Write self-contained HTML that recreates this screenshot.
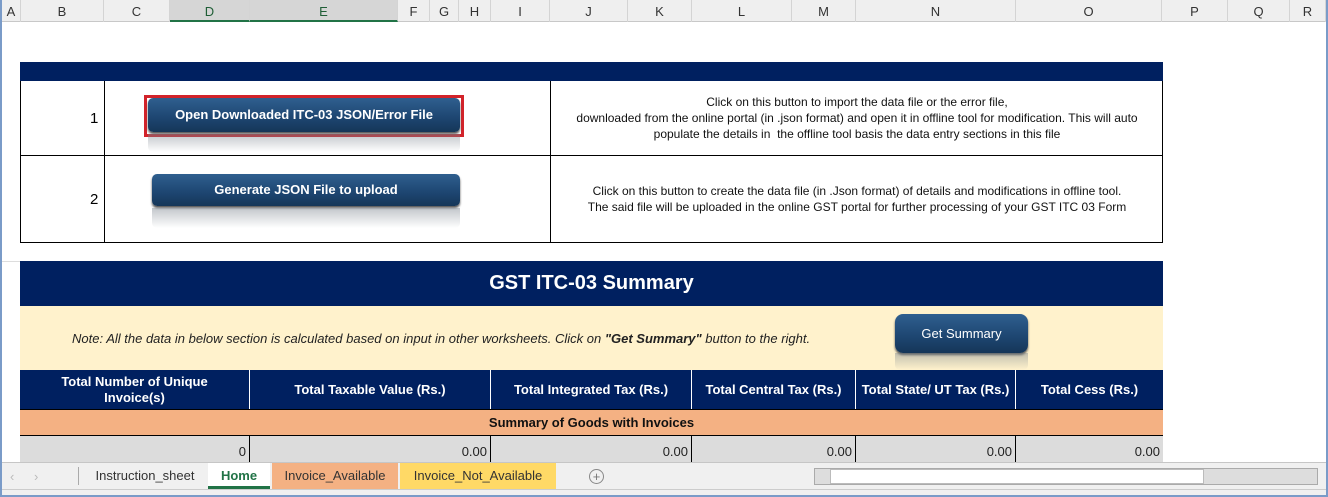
<!DOCTYPE html><html><head><style>
*{margin:0;padding:0;box-sizing:border-box}
body{width:1328px;height:497px;overflow:hidden;background:#fff;font-family:"Liberation Sans",Arial,sans-serif;position:relative}
.a{position:absolute}
.hdr{top:0;height:22px;background:#efefef;border-bottom:1px solid #c8c8c8;font-size:13px;color:#333}
.col{position:absolute;top:0;height:22px;border-right:1px solid #d4d4d4;text-align:center;line-height:24px}
.btn{position:absolute;background:linear-gradient(#2f5f8f,#1d4570 60%,#153658);color:#fff;font-weight:bold;font-size:13px;text-align:center;border-radius:5px;box-shadow:0 2px 2px #555}
.refl{position:absolute;background:linear-gradient(rgba(120,130,140,.45),rgba(255,255,255,0));border-radius:0 0 5px 5px}
.th{position:absolute;color:#fff;font-weight:bold;font-size:13px;text-align:center;border-right:1px solid #fff;display:flex;align-items:center;justify-content:center;height:39px;top:370px}
.td{position:absolute;top:436px;height:26px;border-right:1px solid #000;text-align:right;padding-right:3px;font-size:13px;line-height:32px;color:#222}
</style></head><body>
<div class="a" style="left:0;top:0;width:1328px;height:497px;border:2px solid #7a9bc8;border-top:1px solid #7a9bc8"></div>
<div class="a hdr" style="left:2px;width:1324px">
<div class="col" style="left:0;width:19px">A</div>
<div class="col" style="left:19px;width:83px">B</div>
<div class="col" style="left:102px;width:66px">C</div>
<div class="col" style="left:168px;width:80px;background:#d6d6d6;border-bottom:2px solid #217346;color:#1f5e36">D</div>
<div class="col" style="left:248px;width:148px;background:#d6d6d6;border-bottom:2px solid #217346;color:#1f5e36">E</div>
<div class="col" style="left:396px;width:32px">F</div>
<div class="col" style="left:428px;width:29px">G</div>
<div class="col" style="left:457px;width:32px">H</div>
<div class="col" style="left:489px;width:59px">I</div>
<div class="col" style="left:548px;width:78px">J</div>
<div class="col" style="left:626px;width:64px">K</div>
<div class="col" style="left:690px;width:100px">L</div>
<div class="col" style="left:790px;width:64px">M</div>
<div class="col" style="left:854px;width:160px">N</div>
<div class="col" style="left:1014px;width:146px">O</div>
<div class="col" style="left:1160px;width:66px">P</div>
<div class="col" style="left:1226px;width:62px">Q</div>
<div class="col" style="left:1288px;width:36px">R</div>
</div>
<!-- navy bar -->
<div class="a" style="left:20px;top:62px;width:1143px;height:19px;background:#002060"></div>
<!-- table rows -->
<div class="a" style="left:20px;top:81px;width:1143px;height:162px;border:1px solid #000;border-top:none"></div>
<div class="a" style="left:20px;top:155px;width:1143px;height:1px;background:#000"></div>
<div class="a" style="left:104px;top:81px;width:1px;height:162px;background:#000"></div>
<div class="a" style="left:550px;top:81px;width:1px;height:162px;background:#000"></div>
<div class="a" style="left:90px;top:110px;font-size:15px">1</div>
<div class="a" style="left:90px;top:191px;font-size:15px">2</div>
<div class="a" style="left:144px;top:95px;width:320px;height:42px;border:3px solid #d2232a"></div>
<div class="btn" style="left:148px;top:98px;width:312px;height:34px;line-height:34px">Open Downloaded ITC-03 JSON/Error File</div>
<div class="refl" style="left:148px;top:134px;width:312px;height:18px"></div>
<div class="btn" style="left:152px;top:174px;width:308px;height:32px;line-height:32px">Generate JSON File to upload</div>
<div class="refl" style="left:152px;top:208px;width:308px;height:20px"></div>
<div class="a" style="left:551px;top:94px;width:612px;text-align:center;font-size:12px;line-height:16px;color:#111">Click on this button to import the data file or the error file,<br>downloaded from the online portal (in .json format) and open it in offline tool for modification. This will auto<br>populate the details in &nbsp;the offline tool basis the data entry sections in this file</div>
<div class="a" style="left:551px;top:183px;width:612px;text-align:center;font-size:12px;line-height:16px;color:#111">Click on this button to create the data file (in .Json format) of details and modifications in offline tool.<br>The said file will be uploaded in the online GST portal for further processing of your GST ITC 03 Form</div>
<!-- faint gridlines row 242-261 -->
<div class="a" style="left:2px;top:261px;width:18px;height:200px;border-top:1px solid #ddd"></div>
<!-- title -->
<div class="a" style="left:20px;top:261px;width:1143px;height:45px;background:#002060;color:#fff;font-weight:bold;font-size:20px;text-align:center;line-height:45px">GST ITC-03 Summary</div>
<div class="a" style="left:20px;top:306px;width:1143px;height:64px;background:#fff2cc"></div>
<div class="a" style="left:72px;top:331px;font-size:13px;font-style:italic;color:#222">Note: All the data in below section is calculated based on input in other worksheets. Click on <b>"Get Summary"</b> button to the right.</div>
<div class="btn" style="left:895px;top:314px;width:133px;height:39px;line-height:39px;font-weight:normal;border-radius:8px">Get Summary</div>
<div class="refl" style="left:895px;top:353px;width:133px;height:17px"></div>
<!-- header row -->
<div class="a" style="left:20px;top:370px;width:1143px;height:39px;background:#002060"></div>
<div class="th" style="left:20px;width:230px;line-height:16px">Total Number of Unique<br>Invoice(s)</div>
<div class="th" style="left:250px;width:241px">Total Taxable Value (Rs.)</div>
<div class="th" style="left:491px;width:201px">Total Integrated Tax (Rs.)</div>
<div class="th" style="left:692px;width:164px">Total Central Tax (Rs.)</div>
<div class="th" style="left:856px;width:160px">Total State/ UT Tax (Rs.)</div>
<div class="th" style="left:1016px;width:147px;border:none">Total Cess (Rs.)</div>
<div class="a" style="left:20px;top:409px;width:1143px;height:27px;background:#f4b183;border-top:1px solid #000;border-bottom:1px solid #000;text-align:center;font-weight:bold;font-size:13px;line-height:26px;color:#111">Summary of Goods with Invoices</div>
<div class="a" style="left:20px;top:436px;width:1143px;height:26px;background:#dcdcdc"></div>
<div class="td" style="left:20px;width:230px">0</div>
<div class="td" style="left:250px;width:241px">0.00</div>
<div class="td" style="left:491px;width:201px">0.00</div>
<div class="td" style="left:692px;width:164px">0.00</div>
<div class="td" style="left:856px;width:160px">0.00</div>
<div class="td" style="left:1016px;width:147px;border:none">0.00</div>
<!-- tab bar -->
<div class="a" style="left:2px;top:462px;width:1324px;height:27px;background:#f0f0f0;border-top:1px solid #c6c6c6;font-size:13px;color:#333">
<span class="a" style="left:8px;top:6px;color:#bbb">‹</span><span class="a" style="left:32px;top:6px;color:#bbb">›</span>
<div class="a" style="left:76px;top:4px;width:1px;height:18px;background:#aaa"></div>
<div class="a" style="left:80px;top:0;width:126px;height:26px;text-align:center;line-height:26px">Instruction_sheet</div>
<div class="a" style="left:206px;top:0;width:62px;height:26px;background:#fff;border-bottom:3px solid #217346;text-align:center;line-height:26px;font-weight:bold;color:#217346">Home</div>
<div class="a" style="left:270px;top:0;width:126px;height:26px;background:#f4b183;text-align:center;line-height:26px">Invoice_Available</div>
<div class="a" style="left:398px;top:0;width:156px;height:26px;background:#ffd966;text-align:center;line-height:26px">Invoice_Not_Available</div>
<div class="a" style="left:587px;top:6px;width:15px;height:15px;border:1px solid #888;border-radius:50%;text-align:center;line-height:13px;color:#777">+</div>
<div class="a" style="left:812px;top:5px;width:504px;height:17px;border:1px solid #aaa;background:#ddd"></div>
<div class="a" style="left:828px;top:6px;width:374px;height:15px;background:#fff;border:1px solid #bbb"></div>
</div>
<div class="a" style="left:2px;top:489px;width:1324px;height:6px;background:#f0f0f0;border-top:1px solid #ccc"></div>
</body></html>
